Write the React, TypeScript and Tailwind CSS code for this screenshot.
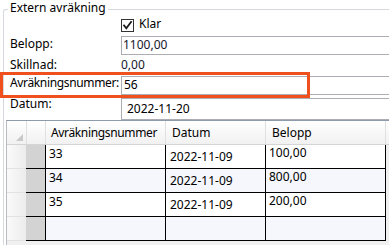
import React from "react";

type Row = { nr: string; datum: string; belopp: string; alt: boolean };

const rows: Row[] = [
  { nr: "33", datum: "2022-11-09", belopp: "100,00", alt: false },
  { nr: "34", datum: "2022-11-09", belopp: "800,00", alt: true },
  { nr: "35", datum: "2022-11-09", belopp: "200,00", alt: false },
  { nr: "", datum: "", belopp: "", alt: true },
];

export default function App() {
  return (
    <div className="relative w-[389px] h-[245px] overflow-hidden bg-white text-[12px] leading-[16px] text-black font-['Noto_Sans',sans-serif]">
      <div className="ml-[3px] w-[420px]">
        {/* group box header */}
        <div className="flex h-[16px]">
          <div className="w-[5px] mt-[9px] border-t border-l border-[#d5d9de] rounded-tl-[3px]" />
          <span className="px-[2px] whitespace-nowrap">Extern avräkning</span>
          <div className="flex-1 mt-[9px] border-t border-[#d5d9de]" />
        </div>
        {/* group box body */}
        <div className="border-l border-[#d5d9de] h-[240px]">
          {/* checkbox row */}
          <div className="flex items-start h-[20px] pl-[117px]">
            <div className="mt-[3px] w-[13px] h-[13px] border border-[#333333] bg-white flex items-center justify-center">
              <svg width="11" height="11" viewBox="0 0 11 11">
                <path d="M1.5 4.8 L4.3 8.2 L9.6 1.2" fill="none" stroke="#1a1a1a" strokeWidth="1.8" />
              </svg>
            </div>
            <span className="ml-[5px]">Klar</span>
          </div>
          {/* Belopp */}
          <div className="flex h-[19px]">
            <div className="w-[117px] pl-[6px] whitespace-nowrap">Belopp:</div>
            <div className="flex-1 h-[19px] border border-[#abadb3] pl-[1px] leading-[15px] text-[#16162e]">1100,00</div>
          </div>
          {/* Skillnad */}
          <div className="flex h-[20px] pt-[2px]">
            <div className="w-[117px] pl-[6px] whitespace-nowrap">Skillnad:</div>
            <div className="flex-1 text-[#16162e]">0,00</div>
          </div>
          {/* Avräkningsnummer */}
          <div className="flex h-[20px]">
            <div className="w-[117px] pl-[6px] whitespace-nowrap tracking-[-0.35px]">Avräkningsnummer:</div>
            <div className="flex-1 mt-[1px] h-[19px] border border-[#abadb3] pl-[2px] leading-[15px]">56</div>
          </div>
          {/* Datum */}
          <div className="flex h-[25px]">
            <div className="w-[117px] pl-[6px] pt-[1px] whitespace-nowrap">Datum:</div>
            <div className="flex-1 mt-[3px] h-[22px] border border-[#abadb3] pl-[5px] pt-[2px]">2022-11-20</div>
          </div>
          {/* Grid */}
          <div className="ml-[2px] h-[130px] border-l border-t border-l-[#b8bcc2] border-t-[#8e9bab] bg-[#f0f0f0]">
            {/* header */}
            <div className="flex h-[24px] border-b border-[#d5d5d5] bg-gradient-to-b from-white to-[#f1f1f1]">
              <div className="relative w-[19px] h-full">
                <svg className="absolute left-[9px] top-[13px]" width="7" height="7" viewBox="0 0 7 7">
                  <path d="M7 0 L7 7 L0 7 Z" fill="#c9c9c9" />
                </svg>
              </div>
              <div className="w-[20px] border-l border-r border-[#e0e0e0]" />
              <div className="w-[120px] border-r border-[#e0e0e0] pl-[5px] flex items-center tracking-[-0.35px] whitespace-nowrap">Avräkningsnummer</div>
              <div className="w-[100px] border-r border-[#e0e0e0] pl-[6px] flex items-center">Datum</div>
              <div className="w-[120px] border-r border-[#e0e0e0] pl-[6px] flex items-center">Belopp</div>
              <div className="flex-1" />
            </div>
            {rows.map((r, i) => (
              <div key={i} className="flex h-[24px]">
                <div className="w-[19px] border-b border-[#e2e2e2] bg-gradient-to-r from-[#fafafa] to-[#ececec]" />
                <div className="w-[20px] bg-[#d3d3d3] border-b border-r border-black" />
                <div className={`w-[120px] border-b border-r border-black pl-[3px] pt-[1px] ${r.alt ? "bg-[#f5f7fc]" : "bg-white"}`}>{r.nr}</div>
                <div className={`w-[100px] border-b border-r border-black pl-[4px] flex items-center ${r.alt ? "bg-[#f5f7fc]" : "bg-white"}`}>{r.datum}</div>
                <div className={`w-[120px] border-b border-r border-black pl-[3px] ${r.alt ? "bg-[#f5f7fc]" : "bg-white"}`}>{r.belopp}</div>
              </div>
            ))}
          </div>
        </div>
      </div>
      {/* annotation highlight */}
      <div className="absolute left-0 top-[72px] w-[310px] h-[26px] border-[3px] border-[#f0501e] pointer-events-none" />
    </div>
  );
}
